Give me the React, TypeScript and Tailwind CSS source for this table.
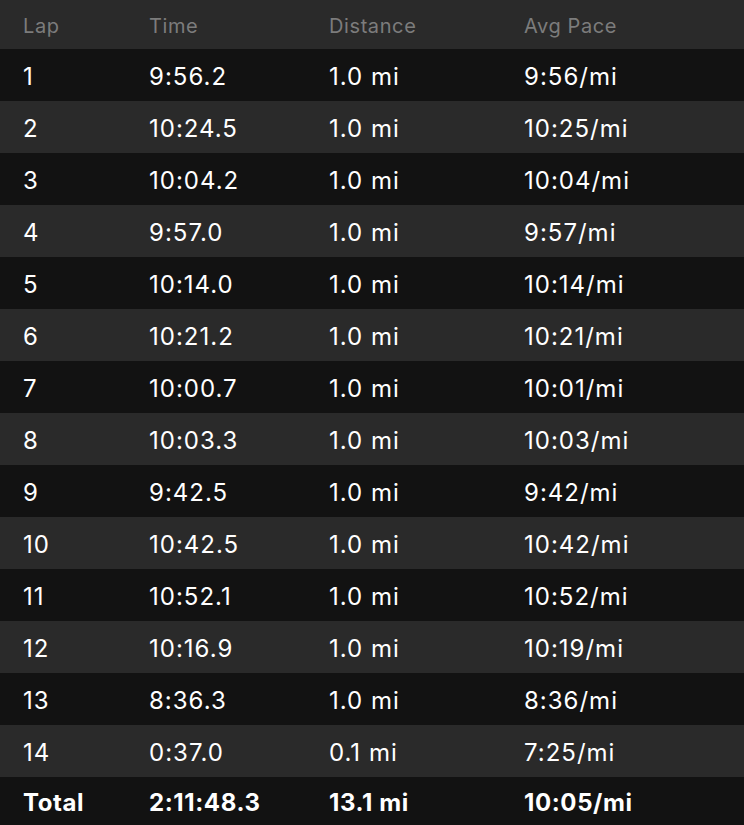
import React from "react";

const laps: [string, string, string, string][] = [
  ["1", "9:56.2", "1.0 mi", "9:56/mi"],
  ["2", "10:24.5", "1.0 mi", "10:25/mi"],
  ["3", "10:04.2", "1.0 mi", "10:04/mi"],
  ["4", "9:57.0", "1.0 mi", "9:57/mi"],
  ["5", "10:14.0", "1.0 mi", "10:14/mi"],
  ["6", "10:21.2", "1.0 mi", "10:21/mi"],
  ["7", "10:00.7", "1.0 mi", "10:01/mi"],
  ["8", "10:03.3", "1.0 mi", "10:03/mi"],
  ["9", "9:42.5", "1.0 mi", "9:42/mi"],
  ["10", "10:42.5", "1.0 mi", "10:42/mi"],
  ["11", "10:52.1", "1.0 mi", "10:52/mi"],
  ["12", "10:16.9", "1.0 mi", "10:19/mi"],
  ["13", "8:36.3", "1.0 mi", "8:36/mi"],
  ["14", "0:37.0", "0.1 mi", "7:25/mi"],
];

export default function App() {
  return (
    <div
      className="w-[744px] h-[825px] bg-[#121212] text-white overflow-hidden"
      style={{ fontFamily: "Inter, 'Noto Sans', sans-serif" }}
    >
      <div className="grid grid-cols-[126px_180px_195px_1fr] items-center h-[49px] bg-[#2a2a2a] text-[#7c7c7c] text-[20px] tracking-[0.6px] pl-[23px] pt-[2px]">
        <div>Lap</div>
        <div>Time</div>
        <div>Distance</div>
        <div>Avg Pace</div>
      </div>
      {laps.map((l, i) => (
        <div
          key={l[0]}
          className={`grid grid-cols-[126px_180px_195px_1fr] items-center h-[52px] pl-[23px] text-[24px] tracking-[1px] pt-[4px] ${
            i % 2 === 0 ? "bg-[#121212]" : "bg-[#2a2a2a]"
          }`}
        >
          <div>{l[0]}</div>
          <div>{l[1]}</div>
          <div>{l[2]}</div>
          <div>{l[3]}</div>
        </div>
      ))}
      <div className="grid grid-cols-[126px_180px_195px_1fr] items-center h-[47px] pl-[23px] text-[24px] tracking-[0.6px] font-bold bg-[#121212] pt-[4px]">
        <div>Total</div>
        <div>2:11:48.3</div>
        <div>13.1 mi</div>
        <div>10:05/mi</div>
      </div>
    </div>
  );
}
